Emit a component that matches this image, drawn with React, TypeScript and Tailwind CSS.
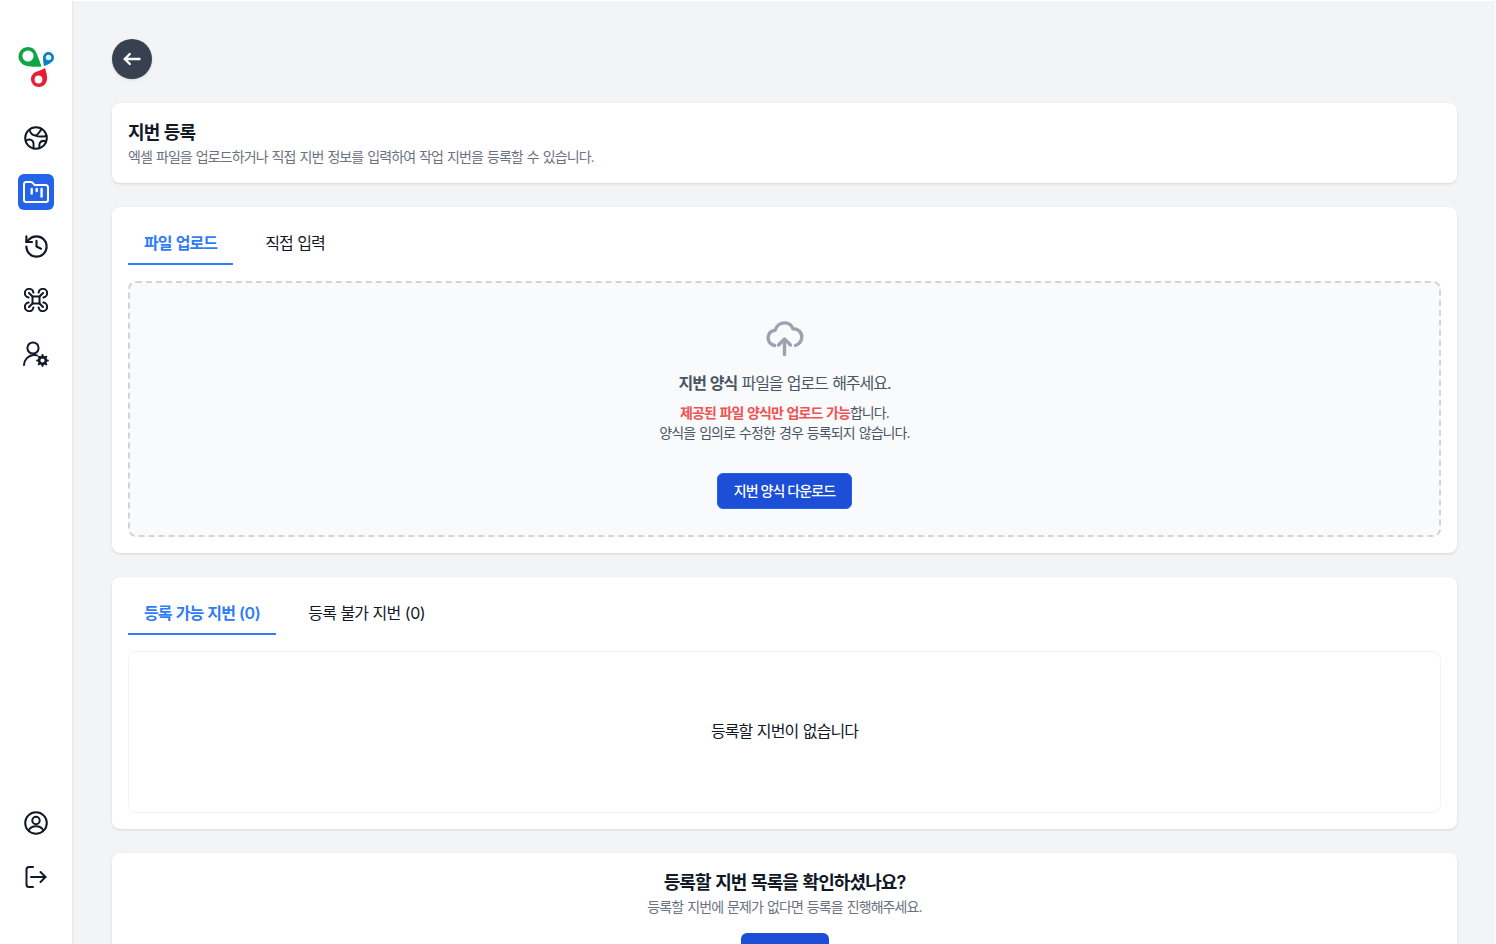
import type { ReactNode } from "react";

const Logo = () => (
  <svg width="36" height="42" viewBox="0 0 36 42" fill="none">
    <path d="M23.5 20.5 C19 20.8 13 21 9 20 C4 19 0.5 15 0.5 10.5 C0.5 5 5 1 10 1 C14 1 17 3 18.5 7 C20 11 22 16 23.5 20.5Z" fill="#10a544" />
    <circle cx="10" cy="10" r="5.6" fill="#fff" />
    <path d="M26 20 C25.3 16.5 25 14 25 11.5 C25 8.5 27.5 6 30.5 6 C33.5 6 36 8.5 36 11.5 C36 14 34.5 15.5 32.5 17 C30.5 18.2 28 19.3 26 20Z" fill="#0b7fc4" />
    <circle cx="30.5" cy="11.5" r="2.8" fill="#e3f1fa" />
    <path d="M27 22 C28 26 29.5 29 29 33.5 C28.5 38 25 41 21 41 C16.5 41 13 37.5 13 33 C13 29 16 26.5 19 25.5 C21.5 24.5 24.5 23.5 27 22Z" fill="#e81f32" />
    <circle cx="20.5" cy="33.5" r="3.9" fill="#fff" />
  </svg>
);

const stroke = { fill: "none", stroke: "#111827", strokeWidth: 2, strokeLinecap: "round" as const, strokeLinejoin: "round" as const };

const GlobeIcon = () => (
  <svg width="24" height="24" viewBox="0 0 24 24" {...stroke}>
    <circle cx="12" cy="12" r="10.8" />
    <path d="M5.5 4 C6.5 7 8.5 9.5 11.5 9.5 C13.5 9.5 14 7.5 15.5 6 C16.2 5 17 4 17.5 2.8" />
    <path d="M11.5 9.5 C14 11 17 11 22.5 10" />
    <path d="M1.8 15 C4 12.8 7.5 13 9 15.5 C10 17.5 9.5 20 9.5 22.5" />
    <path d="M22 15.5 C19.5 14.5 16.8 15 15.8 17 C15 18.5 15.5 20 15.5 22.2" />
  </svg>
);
const FolderIcon = () => (
  <svg width="28" height="24" viewBox="0 0 28 24" fill="none" stroke="#fff" strokeWidth="2" strokeLinecap="round" strokeLinejoin="round">
    <path d="M2 4 C2 2.7 3 2 4 2 H9 C10 2 10.6 2.5 11.2 3.3 L12.5 5 H23.5 C25 5 26 6 26 7.5 V20 C26 21.3 25 22 24 22 H4 C3 22 2 21.3 2 20 Z" />
    <path d="M9.7 9 V13.5" strokeWidth="2.4" />
    <path d="M14.7 9 V11" strokeWidth="2.4" />
    <path d="M19.6 9 V16.5" strokeWidth="2.4" />
  </svg>
);
const HistoryIcon = () => (
  <svg width="27" height="27" viewBox="0 0 24 24" {...stroke} strokeWidth={1.9}>
    <path d="M3 12a9 9 0 1 0 9-9 9.75 9.75 0 0 0-6.74 2.74L3 8" />
    <path d="M3 3v5h5" />
    <path d="M12 7v5l4 2" />
  </svg>
);
const DroneIcon = () => (
  <svg width="24" height="24" viewBox="0 0 24 24" {...stroke}>
    <rect x="8.5" y="8.5" width="7" height="7" />
    <path d="M8.5 8.5 L5 5 M15.5 8.5 L19 5 M8.5 15.5 L5 19 M15.5 15.5 L19 19" />
    <path d="M9.4 4.6 A4.3 4.3 0 1 0 4.6 9.4" />
    <path d="M14.6 4.6 A4.3 4.3 0 1 1 19.4 9.4" />
    <path d="M9.4 19.4 A4.3 4.3 0 1 1 4.6 14.6" />
    <path d="M14.6 19.4 A4.3 4.3 0 1 0 19.4 14.6" />
  </svg>
);
const UserGearIcon = () => (
  <svg width="28" height="28" viewBox="0 0 28 28" {...stroke}>
    <circle cx="11" cy="8" r="5.6" />
    <path d="M2 25 C2 20 6 15.5 11.5 15 C13 14.9 14 15 15 15.4" />
    <circle cx="20.5" cy="20.5" r="3.4" strokeWidth="2.6" />
    <path d="M20.5 15.2v1.6M20.5 24.2v1.6M15.2 20.5h1.6M24.2 20.5h1.6M16.8 16.8l1 1M23.2 23.2l1 1M16.8 24.2l1-1M23.2 17.8l1-1" strokeWidth="2.2" />
  </svg>
);
const UserCircleIcon = () => (
  <svg width="24" height="24" viewBox="0 0 24 24" {...stroke}>
    <circle cx="12" cy="12" r="10.8" />
    <circle cx="12" cy="9.5" r="3.7" />
    <path d="M4.8 19.5 C6 16.4 8.5 15.2 12 15.2 C15.5 15.2 18 16.4 19.2 19.5" />
  </svg>
);
const LogoutIcon = () => (
  <svg width="24" height="24" viewBox="0 0 24 24" {...stroke}>
    <path d="M9 2 H5 C3.5 2 2.5 3 2.5 4.5 V19.5 C2.5 21 3.5 22 5 22 H9" />
    <path d="M7 12 H21.5" />
    <path d="M16.5 7 L21.5 12 L16.5 17" />
  </svg>
);
const CloudIcon = () => (
  <svg width="38" height="36" viewBox="0 0 38 36" fill="none" stroke="#9ca3af" strokeWidth="3.4" strokeLinecap="round" strokeLinejoin="round">
    <path d="M8.5 24.5 C3.5 23 1.8 19.5 2.2 15.8 C2.7 12.2 5 9.8 9 9.4 C10.5 4.7 14.5 1.9 18.5 1.9 C22 1.9 25.5 3.8 27 7.8 C32 7.4 35.8 11.2 35.8 15.8 C35.8 19.8 33.5 23 29.5 24.5" />
    <path d="M18.5 33.5 V18.5" />
    <path d="M12.5 24 L18.5 18 L24.5 24" />
  </svg>
);
const BackIcon = () => (
  <svg width="18" height="14" viewBox="0 0 18 14" fill="none" stroke="#fff" strokeWidth="2.4" strokeLinecap="round" strokeLinejoin="round">
    <path d="M1.8 7 H16.5" />
    <path d="M6.8 2 L1.8 7 L6.8 12" />
  </svg>
);

const Card = ({ children, className = "" }: { children: ReactNode; className?: string }) => (
  <section className={`shrink-0 rounded-lg bg-white shadow ${className}`}>{children}</section>
);

const Tabs = ({ items }: { items: ReactNode[] }) => (
  <div className="flex h-[58px] gap-4">
    {items.map((t, i) => (
      <div
        key={i}
        className={`flex items-end border-b-2 px-4 pb-[8.5px] text-[16px] leading-6 ${i === 0 ? "border-[#2f7cf6] font-semibold text-[#2f7cf6]" : "border-transparent text-[#111827]"}`}
      >
        {t}
      </div>
    ))}
  </div>
);

const Zero = ({ label }: { label: string }) => (
  <span>
    {label} <span className="tracking-[-0.4px]">(0)</span>
  </span>
);

export default function App() {
  return (
    <div
      className="flex h-screen overflow-hidden bg-white pt-px pr-px tracking-[-0.9px] [word-spacing:0.9px] text-[#111827]"
      style={{ fontFamily: '"Inter", "Noto Sans CJK KR", sans-serif' }}
    >
      <aside className="z-10 -mt-px flex w-[72px] shrink-0 flex-col items-center bg-white pt-[46px] pb-[49px] shadow-sm">
        <div className="mb-[32px]"><Logo /></div>
        <nav className="flex flex-col items-center gap-[18px]">
          <div className="flex size-9 items-center justify-center"><GlobeIcon /></div>
          <div className="flex size-9 items-center justify-center rounded-md bg-[#2563eb]"><FolderIcon /></div>
          <div className="flex size-9 items-center justify-center"><HistoryIcon /></div>
          <div className="flex size-9 items-center justify-center"><DroneIcon /></div>
          <div className="flex size-9 items-center justify-center"><UserGearIcon /></div>
        </nav>
        <div className="mt-auto flex flex-col items-center gap-[18px]">
          <div className="flex size-9 items-center justify-center"><UserCircleIcon /></div>
          <div className="flex size-9 items-center justify-center"><LogoutIcon /></div>
        </div>
      </aside>
      <main className="flex min-w-0 flex-1 flex-col gap-6 overflow-hidden bg-[#f3f4f6] pt-[38px] pr-[38px] pl-10">
        <button className="flex size-10 shrink-0 items-center justify-center rounded-full bg-[#374151] shadow-sm">
          <BackIcon />
        </button>
        <Card className="flex h-20 flex-col justify-center px-4">
          <h1 className="text-[18px] leading-7 font-semibold">지번 등록</h1>
          <p className="text-[14px] leading-5 text-[#6b7280]">엑셀 파일을 업로드하거나 직접 지번 정보를 입력하여 작업 지번을 등록할 수 있습니다.</p>
        </Card>
        <Card className="px-4 pb-4">
          <Tabs items={["파일 업로드", "직접 입력"]} />
          <div className="mt-4 flex h-[256px] flex-col items-center rounded-lg border-2 border-dashed border-[#d1d5db] bg-[#f9fafb] pt-[38px]">
            <CloudIcon />
            <p className="mt-[14px] text-[16px] leading-6 tracking-[-1.05px] text-[#4b5563]"><span className="font-semibold">지번 양식</span> 파일을 업로드 해주세요.</p>
            <p className="mt-[8px] text-[14px] leading-5 text-[#4b5563]"><span className="font-semibold text-[#f05252]">제공된 파일 양식만 업로드 가능</span>합니다.</p>
            <p className="text-[14px] leading-5 text-[#4b5563]">양식을 임의로 수정한 경우 등록되지 않습니다.</p>
            <button className="mt-[30px] h-9 rounded-md border border-[#2563eb] bg-[#1d4ed8] px-4 pb-[2px] text-[14px] font-medium text-white">지번 양식 다운로드</button>
          </div>
        </Card>
        <Card className="px-4 pb-4">
          <Tabs items={[<Zero key="a" label="등록 가능 지번" />, <Zero key="b" label="등록 불가 지번" />]} />
          <div className="mt-4 flex h-[162px] items-center justify-center rounded-lg border border-[#f3f4f6] pb-[2px] text-[16px]">등록할 지번이 없습니다</div>
        </Card>
        <Card className="flex flex-col items-center pt-[18px]">
          <h2 className="text-[18px] leading-6 font-semibold">등록할 지번 목록을 확인하셨나요?</h2>
          <p className="mt-[2px] text-[14px] leading-5 text-[#6b7280]">등록할 지번에 문제가 없다면 등록을 진행해주세요.</p>
          <button className="mt-4 h-10 w-[88px] shrink-0 rounded-md bg-[#1d4ed8]" />
        </Card>
      </main>
    </div>
  );
}
